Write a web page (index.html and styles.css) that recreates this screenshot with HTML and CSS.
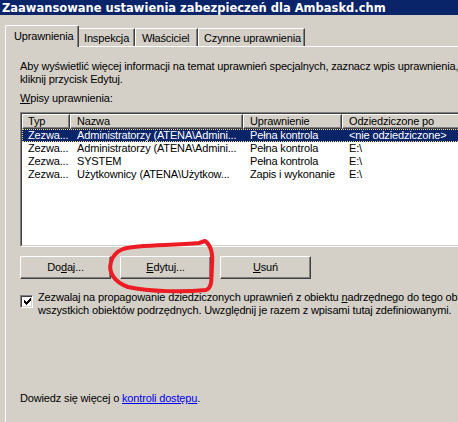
FILE: index.html
```html
<!DOCTYPE html>
<html lang="pl">
<head>
<meta charset="utf-8">
<title>Zaawansowane ustawienia zabezpieczeń</title>
<link rel="stylesheet" href="styles.css">
</head>
<body>
<div class="window">
  <div class="titlebar">Zaawansowane ustawienia zabezpieczeń dla Ambaskd.chm</div>
  <div class="tabs">
    <div class="tab tab-active">Uprawnienia</div>
    <div class="tab tab-inspekcja">Inspekcja</div>
    <div class="tab tab-wlasciciel">Właściciel</div>
    <div class="tab tab-czynne">Czynne uprawnienia</div>
  </div>
  <div class="panel">
    <p class="intro">Aby wyświetlić więcej informacji na temat uprawnień specjalnych, zaznacz wpis uprawnienia, a następnie<br>kliknij przycisk Edytuj.</p>
    <p class="label"><u>W</u>pisy uprawnienia:</p>
    <div class="list">
      <div class="list-inner">
        <div class="row header">
          <div class="cell c1">Typ</div>
          <div class="cell c2">Nazwa</div>
          <div class="cell c3">Uprawnienie</div>
          <div class="cell c4">Odziedziczone po</div>
        </div>
        <div class="row selected">
          <div class="cell c1">Zezwa...</div>
          <div class="cell c2">Administratorzy (ATENA\Admini...</div>
          <div class="cell c3">Pełna kontrola</div>
          <div class="cell c4">&lt;nie odziedziczone&gt;</div>
        </div>
        <div class="row">
          <div class="cell c1">Zezwa...</div>
          <div class="cell c2">Administratorzy (ATENA\Admini...</div>
          <div class="cell c3">Pełna kontrola</div>
          <div class="cell c4">E:\</div>
        </div>
        <div class="row">
          <div class="cell c1">Zezwa...</div>
          <div class="cell c2">SYSTEM</div>
          <div class="cell c3">Pełna kontrola</div>
          <div class="cell c4">E:\</div>
        </div>
        <div class="row">
          <div class="cell c1">Zezwa...</div>
          <div class="cell c2">Użytkownicy (ATENA\Użytkow...</div>
          <div class="cell c3">Zapis i wykonanie</div>
          <div class="cell c4">E:\</div>
        </div>
      </div>
    </div>
    <div class="buttons">
      <div class="btn">Do<u>d</u>aj...</div>
      <div class="btn"><u>E</u>dytuj...</div>
      <div class="btn"><u>U</u>suń</div>
    </div>
    <div class="check-row">
      <div class="checkbox">
        <svg width="7" height="7" viewBox="0 0 7 7"><path d="M0 2h1v1h1v1h1v-1h1v-1h1v-1h1v-1h1v3h-1v1h-1v1h-1v1h-1v1h-1v-1h-1v-1h-1z" fill="#000"/></svg>
      </div>
      <div class="check-text">Zezwalaj na propagowanie dziedziczonych uprawnień z obiektu <u>n</u>adrzędnego do tego obiektu i<br>wszystkich obiektów podrzędnych. Uwzględnij je razem z wpisami tutaj zdefiniowanymi.</div>
    </div>
    <p class="more">Dowiedz się więcej o <a class="link" href="#">kontroli dostępu</a>.</p>
  </div>
</div>
<svg class="marker" width="458" height="422" viewBox="0 0 458 422">
  <path d="M123 249 C140 244 172 246 199 243 L205 241 C211 245 213 255 212 266 C211 278 213 287 206 290 C185 292 150 292 128 287 C114 282 108 272 111 262 C113 255 118 251 123 249" fill="none" stroke="#ED1C24" stroke-width="4" stroke-linecap="round" stroke-linejoin="round"/>
</svg>
</body>
</html>
```
FILE: styles.css
```css
html, body {
  margin: 0;
  padding: 0;
}
body {
  width: 458px;
  height: 422px;
  overflow: hidden;
  position: relative;
  background: #D4D0C8;
  font-family: "Liberation Sans", Arial, sans-serif;
  font-size: 11px;
  letter-spacing: -0.15px;
  color: #000;
}
.window {
  width: 458px;
  height: 422px;
  overflow: hidden;
}
.titlebar {
  height: 13px;
  padding: 2px 0 0 2px;
  line-height: 13px;
  background: #0A246A;
  color: #fff;
  font-family: "DejaVu Sans", sans-serif;
  font-weight: bold;
  font-size: 11.5px;
  letter-spacing: 0;
  white-space: nowrap;
}
.tabs {
  display: flex;
  align-items: flex-end;
  height: 21px;
  padding: 10px 0 0 5px;
}
.tab {
  box-sizing: border-box;
  flex: none;
  height: 18px;
  line-height: 14px;
  padding: 2px 0 0 5px;
  border-top: 1px solid #fff;
  border-right: 1px solid #404040;
  box-shadow: inset -1px 0 #808080;
  white-space: nowrap;
}
.tab-active {
  position: relative;
  z-index: 1;
  height: 22px;
  margin-bottom: -1px;
  width: 74px;
  padding: 3px 0 0 8px;
  border-left: 1px solid #fff;
  border-radius: 2px 2px 0 0;
  background: #D4D0C8;
}
.tab-inspekcja { width: 56px; }
.tab-wlasciciel { width: 63px; border-left: 1px solid #fff; padding-left: 6px; }
.tab-czynne { width: 107px; border-left: 1px solid #fff; padding-left: 5px; }
.panel {
  margin-left: 5px;
  border-top: 1px solid #fff;
  border-left: 1px solid #fff;
  padding: 13px 0 0 14px;
  height: 400px;
}
.intro, .label, .more {
  margin: 0;
  line-height: 13px;
  white-space: nowrap;
}
.label {
  margin-top: 6px;
}
.list {
  margin-top: 7px;
  width: 460px;
  height: 133px;
  border: 1px solid;
  border-color: #808080 #fff #fff #808080;
}
.list-inner {
  height: 131px;
  border: 1px solid;
  border-color: #404040 #D4D0C8 #D4D0C8 #404040;
  background: #fff;
  overflow: hidden;
}
.row {
  display: flex;
  height: 13px;
  line-height: 13px;
  white-space: nowrap;
  width: 520px;
}
.cell {
  box-sizing: border-box;
  flex: none;
  padding-left: 7px;
  overflow: hidden;
}
.c1 { width: 48px; padding-left: 6px; }
.c2 { width: 173px; }
.c3 { width: 99px; }
.c4 { width: 200px; }
.header {
  height: 15px;
}
.header .cell {
  height: 15px;
  line-height: 12px;
  border-top: 1px solid #fff;
  border-left: 1px solid #fff;
  border-right: 1px solid #404040;
  border-bottom: 1px solid #404040;
  box-shadow: inset -1px -1px #808080;
  background: #D4D0C8;
  padding-left: 5px;
}
.header .c2, .header .c3, .header .c4 { padding-left: 6px; }
.selected {
  background: #0A246A;
  color: #fff;
  outline: 1px dotted #F0D890;
  outline-offset: -1px;
}
.buttons {
  display: flex;
  gap: 9px;
  margin-top: 9px;
}
.btn {
  box-sizing: border-box;
  flex: none;
  width: 91px;
  height: 23px;
  line-height: 21px;
  text-align: center;
  border: 1px solid;
  border-color: #fff #404040 #404040 #fff;
  box-shadow: inset -1px -1px #808080;
}
.check-row {
  display: flex;
  align-items: flex-start;
  gap: 5px;
  margin-top: 12px;
}
.checkbox {
  box-sizing: border-box;
  flex: none;
  width: 13px;
  height: 13px;
  margin-top: 4px;
  border: 1px solid;
  border-color: #808080 #fff #fff #808080;
  box-shadow: inset 1px 1px #404040, inset -1px -1px #D4D0C8;
  background: #fff;
  display: flex;
  align-items: center;
  justify-content: center;
}
.checkbox svg {
  display: block;
  margin-left: 1px;
}
.check-text {
  line-height: 13px;
  white-space: nowrap;
}
.more {
  margin-top: 75px;
}
.link {
  color: #0000EE;
  text-decoration: underline;
}
.marker {
  position: absolute;
  left: 0;
  top: 0;
  pointer-events: none;
}
```
